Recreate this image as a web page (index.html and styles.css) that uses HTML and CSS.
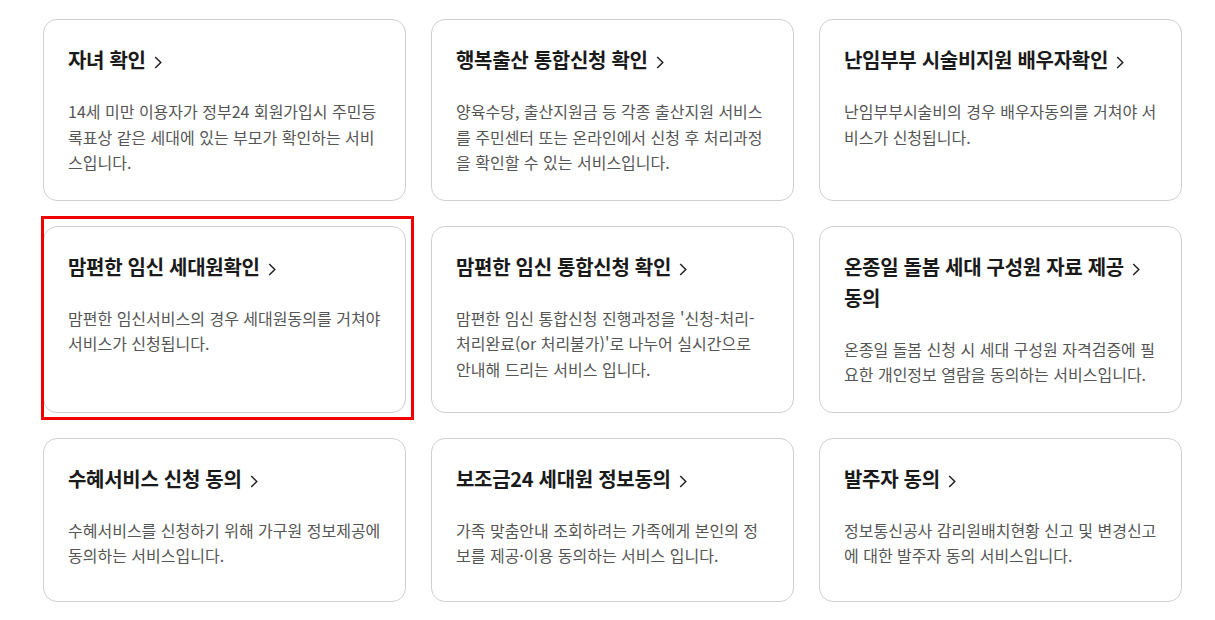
FILE: index.html
```html
<!DOCTYPE html>
<html lang="ko">
<head>
    <meta charset="UTF-8">
    <meta name="viewport" content="width=device-width, initial-scale=1.0">
    <title>동의 서비스</title>
    <link rel="stylesheet" href="styles.css">
</head>
<body>
    <div class="service-list">
        <a class="service-card" href="#">
            <h3 class="service-title">자녀 확인 <svg class="chevron" viewBox="0 0 8 14"><path d="M1 1l6 6-6 6"/></svg></h3>
            <p class="service-desc">14세 미만 이용자가 정부24 회원가입시 주민등록표상 같은 세대에 있는 부모가 확인하는 서비스입니다.</p>
        </a>
        <a class="service-card" href="#">
            <h3 class="service-title">행복출산 통합신청 확인 <svg class="chevron" viewBox="0 0 8 14"><path d="M1 1l6 6-6 6"/></svg></h3>
            <p class="service-desc">양육수당, 출산지원금 등 각종 출산지원 서비스를 주민센터 또는 온라인에서 신청 후 처리과정을 확인할 수 있는 서비스입니다.</p>
        </a>
        <a class="service-card" href="#">
            <h3 class="service-title">난임부부 시술비지원 배우자확인 <svg class="chevron" viewBox="0 0 8 14"><path d="M1 1l6 6-6 6"/></svg></h3>
            <p class="service-desc">난임부부시술비의 경우 배우자동의를 거쳐야 서비스가 신청됩니다.</p>
        </a>
        <a class="service-card selected" href="#">
            <h3 class="service-title">맘편한 임신 세대원확인 <svg class="chevron" viewBox="0 0 8 14"><path d="M1 1l6 6-6 6"/></svg></h3>
            <p class="service-desc">맘편한 임신서비스의 경우 세대원동의를 거쳐야 서비스가 신청됩니다.</p>
        </a>
        <a class="service-card" href="#">
            <h3 class="service-title">맘편한 임신 통합신청 확인 <svg class="chevron" viewBox="0 0 8 14"><path d="M1 1l6 6-6 6"/></svg></h3>
            <p class="service-desc keep-words">맘편한 임신 통합신청 진행과정을 '신청-처리-처리완료(or 처리불가)'로 나누어 실시간으로 안내해 드리는 서비스 입니다.</p>
        </a>
        <a class="service-card" href="#">
            <h3 class="service-title">온종일 돌봄 세대 구성원 자료 제공 <svg class="chevron" viewBox="0 0 8 14"><path d="M1 1l6 6-6 6"/></svg><br>동의</h3>
            <p class="service-desc">온종일 돌봄 신청 시 세대 구성원 자격검증에 필요한 개인정보 열람을 동의하는 서비스입니다.</p>
        </a>
        <a class="service-card" href="#">
            <h3 class="service-title">수혜서비스 신청 동의 <svg class="chevron" viewBox="0 0 8 14"><path d="M1 1l6 6-6 6"/></svg></h3>
            <p class="service-desc">수혜서비스를 신청하기 위해 가구원 정보제공에 동의하는 서비스입니다.</p>
        </a>
        <a class="service-card" href="#">
            <h3 class="service-title">보조금24 세대원 정보동의 <svg class="chevron" viewBox="0 0 8 14"><path d="M1 1l6 6-6 6"/></svg></h3>
            <p class="service-desc">가족 맞춤안내 조회하려는 가족에게 본인의 정보를 제공·이용 동의하는 서비스 입니다.</p>
        </a>
        <a class="service-card" href="#">
            <h3 class="service-title">발주자 동의 <svg class="chevron" viewBox="0 0 8 14"><path d="M1 1l6 6-6 6"/></svg></h3>
            <p class="service-desc">정보통신공사 감리원배치현황 신고 및 변경신고에 대한 발주자 동의 서비스입니다.</p>
        </a>
    </div>
</body>
</html>
```

FILE: styles.css
```css
* {
    margin: 0;
    padding: 0;
    box-sizing: border-box;
}

body {
    background-color: #fff;
    font-family: 'Noto Sans CJK KR', 'Noto Sans', sans-serif;
    color: #1d1d1d;
}

.service-list {
    display: grid;
    grid-template-columns: repeat(3, 363px);
    gap: 25px;
    padding: 19px 0 0 43px;
}

.service-card {
    position: relative;
    display: block;
    min-height: 164px;
    padding: 24px;
    border: 1px solid #cfcfcf;
    border-radius: 14px;
    background-color: #fff;
    color: inherit;
    text-decoration: none;
}

.service-card.selected::after {
    content: '';
    position: absolute;
    top: -11px;
    left: -3px;
    right: -9px;
    bottom: -8px;
    border: 3px solid #f00000;
}

.service-title {
    font-size: 20px;
    font-weight: 700;
    line-height: 31px;
    letter-spacing: -0.3px;
    color: #1a1a1a;
}

.chevron {
    width: 8px;
    height: 13px;
    margin-left: 3px;
    vertical-align: -1px;
    fill: none;
    stroke: #222;
    stroke-width: 1.6;
}

.service-desc {
    margin-top: 24px;
    font-size: 16px;
    line-height: 25.5px;
    color: #555;
    word-break: break-all;
}

.service-desc.keep-words {
    word-break: keep-all;
}
```
